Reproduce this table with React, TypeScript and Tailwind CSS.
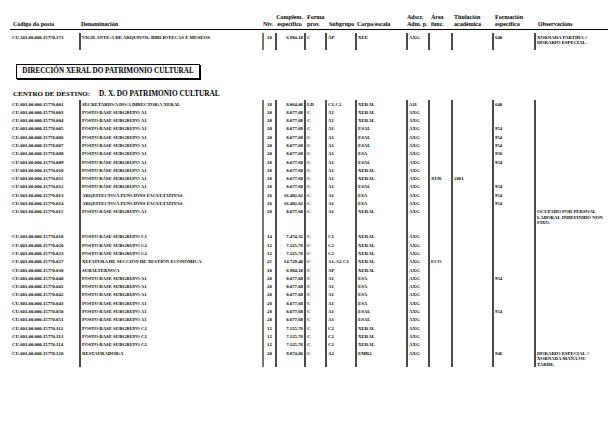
import React from 'react';

type Row = {
  code: string;
  name: string;
  niv: string;
  comp: string;
  forma: string;
  sub: string;
  corpo: string;
  adscr: string;
  area?: string;
  tit?: string;
  form?: string;
  obs?: string[];
  h?: string;
};

const cols = 'grid grid-cols-[69px_183px_13px_29px_21px_30px_51px_22px_23px_41px_42px_72px]';

const A1 = { name: 'POSTO BASE SUBGRUPO A1', niv: '20', comp: '8.077,68', forma: 'C', sub: 'A1', adscr: 'AXG' };
const C2 = { name: 'POSTO BASE SUBGRUPO C2', niv: '12', comp: '7.125,76', forma: 'C', sub: 'C2', corpo: 'XERAL', adscr: 'AXG' };

const first: Row[] = [
  {
    code: 'CU.501.00.000.15770.173', name: 'VIGILANTE/A DE ARQUIVOS, BIBLIOTECAS E MUSEOS', niv: '10', comp: '6.984,18',
    forma: 'C', sub: 'AP', corpo: 'XEE', adscr: 'AXG', form: '640', obs: ['XORNADA PARTIDA //', 'HORARIO ESPECIAL.'], h: 'h-[17px]',
  },
];

const rows: Row[] = [
  { code: 'CU.601.00.000.15770.001', name: 'SECRETARIO/A DO/A DIRECTOR/A XERAL', niv: '18', comp: '8.064,06', forma: 'LD', sub: 'C1-C2', corpo: 'XERAL', adscr: 'A11', form: '640' },
  { code: 'CU.601.00.000.15770.003', ...A1, corpo: 'XERAL' },
  { code: 'CU.601.00.000.15770.004', ...A1, corpo: 'XERAL' },
  { code: 'CU.601.00.000.15770.005', ...A1, corpo: 'ESAL', form: '954' },
  { code: 'CU.601.00.000.15770.006', ...A1, corpo: 'ESAL', form: '954' },
  { code: 'CU.601.00.000.15770.007', ...A1, corpo: 'ESAL', form: '954' },
  { code: 'CU.601.00.000.15770.008', ...A1, corpo: 'ESA', form: '956' },
  { code: 'CU.601.00.000.15770.009', ...A1, corpo: 'ESAL', form: '954' },
  { code: 'CU.601.00.000.15770.010', ...A1, corpo: 'XERAL' },
  { code: 'CU.601.00.000.15770.011', ...A1, corpo: 'XERAL', area: 'XUR', tit: '2061' },
  { code: 'CU.601.00.000.15770.012', ...A1, corpo: 'ESAL', form: '954' },
  { code: 'CU.601.00.000.15770.013', name: 'ARQUITECTO/A FUNCIÓNS FACULTATIVAS', niv: '26', comp: '16.482,62', forma: 'C', sub: 'A1', corpo: 'ESA', adscr: 'AXG', form: '954' },
  { code: 'CU.601.00.000.15770.014', name: 'ARQUITECTO/A FUNCIÓNS FACULTATIVAS', niv: '26', comp: '16.482,62', forma: 'C', sub: 'A1', corpo: 'ESA', adscr: 'AXG', form: '954' },
  { code: 'CU.601.00.000.15770.015', ...A1, corpo: 'XERAL', obs: ['OCUPADO POR PERSOAL', 'LABORAL INDEFINIDO NON', 'FIXO.'], h: 'h-[25px]' },
  { code: 'CU.601.00.000.15770.018', name: 'POSTO BASE SUBGRUPO C1', niv: '14', comp: '7.474,32', forma: 'C', sub: 'C1', corpo: 'XERAL', adscr: 'AXG' },
  { code: 'CU.601.00.000.15770.020', ...C2 },
  { code: 'CU.601.00.000.15770.023', ...C2 },
  { code: 'CU.601.00.000.15770.027', name: 'XEFATURA DE SECCIÓN DE XESTIÓN ECONÓMICA', niv: '25', comp: '14.729,40', forma: 'C', sub: 'A1-A2-C1', corpo: 'XERAL', adscr: 'AXG', area: 'ECO' },
  { code: 'CU.601.00.000.15770.030', name: 'SUBALTERNO/A', niv: '10', comp: '6.984,18', forma: 'C', sub: 'AP', corpo: 'XERAL', adscr: 'AXG' },
  { code: 'CU.601.00.000.15770.040', ...A1, corpo: 'ESA', form: '954' },
  { code: 'CU.601.00.000.15770.041', ...A1, corpo: 'ESA' },
  { code: 'CU.601.00.000.15770.042', ...A1, corpo: 'ESA' },
  { code: 'CU.601.00.000.15770.043', ...A1, corpo: 'ESA' },
  { code: 'CU.601.00.000.15770.050', ...A1, corpo: 'ESAL', form: '954' },
  { code: 'CU.601.00.000.15770.051', ...A1, corpo: 'ESAL' },
  { code: 'CU.601.00.000.15770.112', ...C2 },
  { code: 'CU.601.00.000.15770.113', ...C2 },
  { code: 'CU.601.00.000.15770.114', ...C2 },
  { code: 'CU.601.00.000.15770.120', name: 'RESTAURADOR/A', niv: '20', comp: '9.874,06', forma: 'C', sub: 'A2', corpo: 'EMR2', adscr: 'AXG', form: '946', obs: ['HORARIO ESPECIAL //', 'XORNADA MAÑÁ OU', 'TARDE.'], h: 'h-[17px]' },
];

const line = 'border-l-2 border-[#4a4a4a]';
const cell = `${line} pl-[1px] pt-[1.5px] whitespace-nowrap overflow-hidden`;

function DataRow({ r }: { r: Row }) {
  return (
    <div className={`${cols} ${r.h ?? 'h-[8.3px]'} text-[4.8px] leading-[5px] font-bold`}>
      <div className="pl-[2px] pt-[1.5px] whitespace-nowrap">{r.code}</div>
      <div className={cell}>{r.name}</div>
      <div className="border-l-2 border-[#777] pt-[1.5px] text-center">{r.niv}</div>
      <div className={`${line} pt-[1.5px] pr-[1px] text-right`}>{r.comp}</div>
      <div className={`${line} pl-[1px] pt-[1.5px]`}>{r.forma}</div>
      <div className={cell}>{r.sub}</div>
      <div className={cell}>{r.corpo}</div>
      <div className={cell}>{r.adscr}</div>
      <div className={cell}>{r.area}</div>
      <div className={cell}>{r.tit}</div>
      <div className={cell}>{r.form}</div>
      <div className={`${line} pl-[1px] pt-[1.5px] leading-[5.5px]`}>
        {r.obs?.map((l) => (
          <div key={l} className="whitespace-nowrap">{l}</div>
        ))}
      </div>
    </div>
  );
}

export default function App() {
  return (
    <div className="w-[615px] h-[439px] bg-white text-black pl-[10px] pt-[14px] font-['Liberation_Serif','Times_New_Roman',serif]">
      <div className={`${cols} w-[598px] border-b border-black pb-[1px] text-[6px] leading-[7px] font-bold items-end whitespace-nowrap`}>
        <div className="pl-[3px]">Código do posto</div>
        <div className="pl-[2px]">Denominación</div>
        <div className="pl-[1px]">Niv.</div>
        <div className="text-center">
          <div>Complem.</div>
          <div>específico</div>
        </div>
        <div className="pl-[3px]">
          <div>Forma</div>
          <div>prov.</div>
        </div>
        <div className="pl-[4px]">Subgrupo</div>
        <div className="pl-[2px]">Corpo/escala</div>
        <div className="pl-[1px]">
          <div>Adscr.</div>
          <div>Adm. p.</div>
        </div>
        <div className="pl-[3px]">
          <div>Área</div>
          <div>func.</div>
        </div>
        <div className="pl-[3px]">
          <div>Titulación</div>
          <div>académica</div>
        </div>
        <div className="pl-[3px]">
          <div>Formación</div>
          <div>específica</div>
        </div>
        <div className="pl-[4px]">Observacións</div>
      </div>

      <div className="mt-[3px]">
        {first.map((r) => (
          <DataRow key={r.code} r={r} />
        ))}
      </div>

      <div className="mt-[14px] ml-[6px] w-[184px] h-[15px] border border-black shadow-[1px_1px_0_#000] flex items-center justify-center text-[7.2px] font-bold">
        DIRECCIÓN XERAL DO PATRIMONIO CULTURAL
      </div>

      <div className="mt-[11px] pl-[3px] flex items-baseline leading-[8px] font-bold whitespace-nowrap">
        <span className="w-[86px] text-[7px]">CENTRO DE DESTINO:</span>
        <span className="text-[7.3px]">D. X. DO PATRIMONIO CULTURAL</span>
      </div>

      <div className="mt-[2px]">
        {rows.map((r) => (
          <DataRow key={r.code} r={r} />
        ))}
      </div>
    </div>
  );
}
